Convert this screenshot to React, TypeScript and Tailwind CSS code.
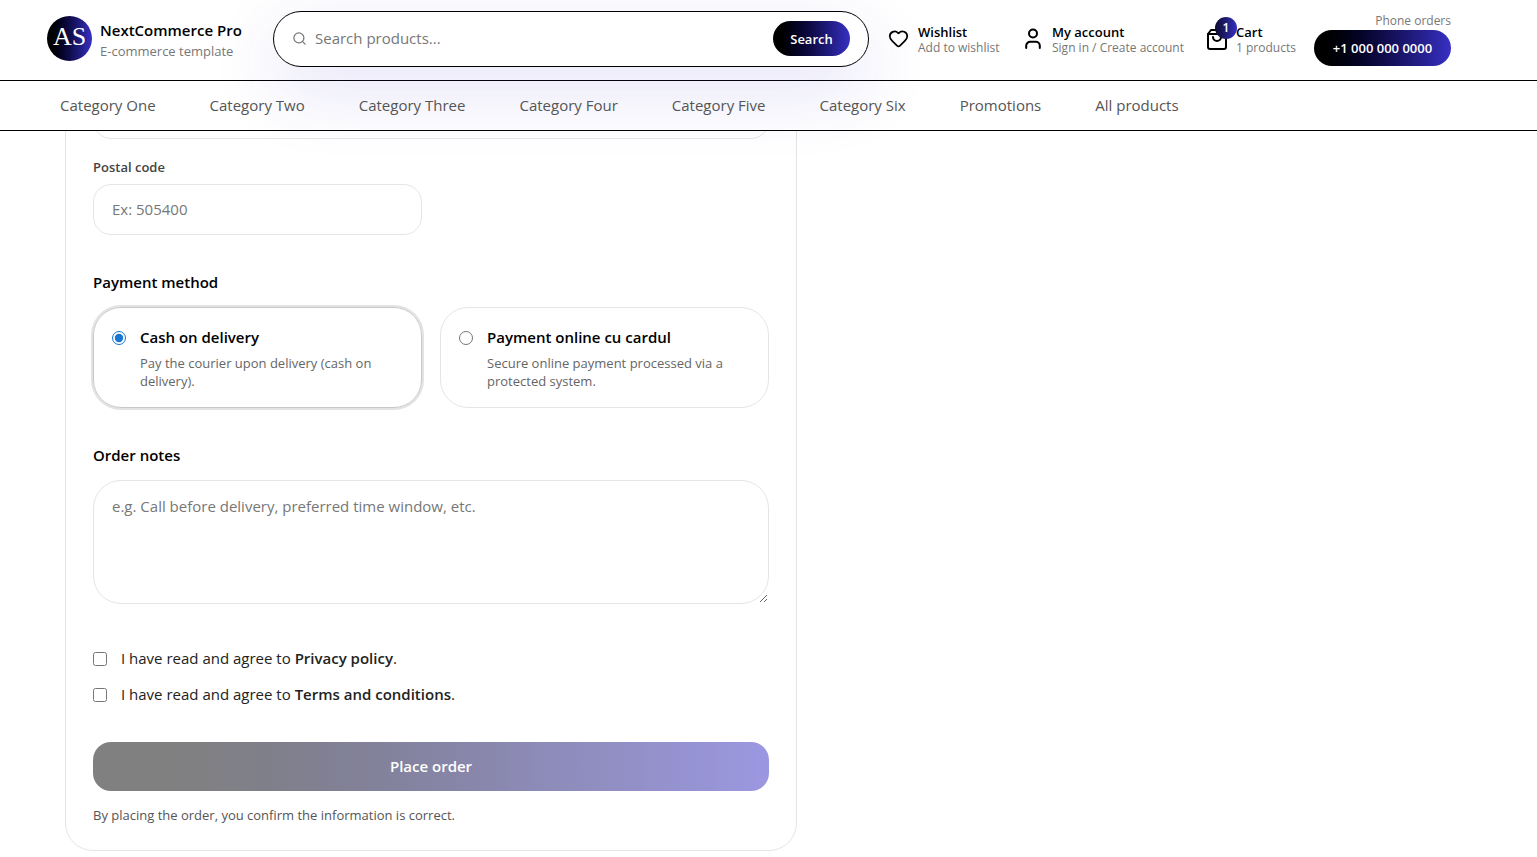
import { Heart, Search } from "lucide-react";

const categories = [
  "Category One",
  "Category Two",
  "Category Three",
  "Category Four",
  "Category Five",
  "Category Six",
  "Promotions",
  "All products",
];

const payments = [
  { id: "cod", title: "Cash on delivery", text: "Pay the courier upon delivery (cash on delivery)." },
  { id: "card", title: "Payment online cu cardul", text: "Secure online payment processed via a protected system." },
];

const policies = [
  { id: "privacy", label: "Privacy policy" },
  { id: "terms", label: "Terms and conditions" },
];

const UserIcon = () => (
  <svg className="shrink-0" width="20" height="22" viewBox="0 0 20 22" fill="none" stroke="currentColor" strokeWidth="2" strokeLinecap="round">
    <circle cx="10" cy="5.5" r="4" />
    <path d="M3.2 20v-2.2a4 4 0 0 1 4-4h5.600a4 4 0 0 1 4 4V20" />
  </svg>
);

const BagIcon = () => (
  <svg className="shrink-0" width="20" height="22" viewBox="0 0 20 22" fill="none" stroke="currentColor" strokeWidth="2" strokeLinecap="round" strokeLinejoin="round">
    <path d="M4 2h12l3 4v13a2 2 0 0 1-2 2H3a2 2 0 0 1-2-2V6z" />
    <path d="M1 6h18M6 9a4 4 0 0 0 8 0" />
  </svg>
);

const Header = () => {
  return (
    <header className="relative z-10 bg-white">
      <div className="flex h-[80px] items-center pr-[86px] pb-[3px] pl-[47px]">
        <a href="#" className="flex w-[226px] shrink-0 items-center gap-2">
          <span className="flex size-[45px] shrink-0 items-center justify-center rounded-full bg-linear-to-r from-black to-[#3730c4] pb-1 font-['Liberation_Serif',serif] text-[26px] leading-none text-white">
            AS
          </span>
          <span className="flex flex-col pt-[3px]">
            <span className="text-[15px] leading-[22px] font-semibold text-black">NextCommerce Pro</span>
            <span className="text-[13px] leading-5 text-[#777]">E-commerce template</span>
          </span>
        </a>
        <form className="mr-[19px] flex h-14 min-w-0 flex-1 items-center rounded-full border border-black bg-white px-[18px] shadow-[0_24px_70px_rgba(55,48,196,0.14)]">
          <Search className="size-[15px] shrink-0 text-[#777]" strokeWidth={2} />
          <input type="search" aria-label="Search products" placeholder="Search products..." className="ml-2 min-w-0 flex-1 bg-transparent text-[15px] outline-none placeholder:text-[#777]" />
          <button type="submit" className="h-[35px] w-[77px] rounded-full bg-linear-to-r from-black to-[#3730c4] pt-[3px] text-[13px] font-semibold text-white">
            Search
          </button>
        </form>
        <div className="flex shrink-0 items-center gap-6 leading-4">
          <a href="#" className="flex w-[111px] items-center gap-[9px] whitespace-nowrap">
            <Heart className="size-[21px] shrink-0" strokeWidth={2} />
            <span className="flex flex-col pt-[3px]">
              <span className="text-[13px] font-semibold">Wishlist</span>
              <span className="text-[12px] text-[#777]">Add to wishlist</span>
            </span>
          </a>
          <a href="#" className="flex w-[160px] items-center gap-[9px] whitespace-nowrap">
            <UserIcon />
            <span className="flex flex-col pt-[3px]">
              <span className="text-[13px] font-semibold">My account</span>
              <span className="text-[12px] text-[#777]">Sign in / Create account</span>
            </span>
          </a>
          <a href="#" className="relative flex w-[88px] items-center gap-[9px] whitespace-nowrap">
            <BagIcon />
            <span className="absolute -top-1 left-2 flex size-[22px] items-center justify-center rounded-full bg-linear-to-r from-[#0c0b30] to-[#3730c4] text-[12px] font-semibold text-white">
              1
            </span>
            <span className="flex flex-col pt-[3px]">
              <span className="text-[13px] font-semibold">Cart</span>
              <span className="text-[12px] text-[#777]">1 products</span>
            </span>
          </a>
        </div>
        <div className="ml-[19px] flex w-[137px] shrink-0 flex-col items-end pt-px">
          <span className="text-[12px] leading-[18px] text-[#777]">Phone orders</span>
          <a href="tel:+10000000000" className="flex h-9 w-full items-center justify-center rounded-full bg-linear-to-r from-black to-[#3730c4] pt-0.5 text-[13px] font-semibold text-white">
            +1 000 000 0000
          </a>
        </div>
      </div>
      <nav className="flex h-[51px] items-center gap-[54px] border-y border-black px-[60px] text-[15px] whitespace-nowrap text-[#555]">
        {categories.map((name) => (
          <a key={name} href="#">
            {name}
          </a>
        ))}
      </nav>
    </header>
  );
};

export default function App() {
  return (
    <div className="min-h-screen bg-white font-['Open_Sans',sans-serif] text-black">
      <Header />
      <main className="overflow-hidden px-[65px] pb-[6px]">
        <form className="-mt-20 w-full max-w-[732px] rounded-[28px] border border-[#e5e5e5] bg-white px-[27px] pt-9 pb-[25px]">
          <input aria-label="Address" className="block h-[51px] w-full rounded-[18px] border border-[#e5e5e5] px-[18px]" />

          <div className="mt-[18px] grid grid-cols-2 gap-[18px]">
            <div>
              <label htmlFor="postal" className="block text-[13px] leading-5 font-semibold text-[#444]">
                Postal code
              </label>
              <input id="postal" placeholder="Ex: 505400" className="mt-[7px] block h-[51px] w-full rounded-[18px] border border-[#e5e5e5] px-[18px] pb-0.5 text-[15px] outline-none placeholder:text-[#777]" />
            </div>
          </div>

          <h2 className="mt-[35px] text-[15px] leading-6 font-semibold">Payment method</h2>
          <div className="mt-[13px] grid grid-cols-2 gap-[18px]">
            {payments.map((item) => (
              <label
                key={item.id}
                htmlFor={item.id}
                className="flex gap-[14px] rounded-[28px] border border-[#e5e5e5] px-[18px] py-[17px] has-checked:border-[#c8c8c8] has-checked:ring-2 has-checked:ring-[#e3e3e3]"
              >
                <input type="radio" id={item.id} name="payment" defaultChecked={item.id === "cod"} className="mt-[6px] size-[14px] shrink-0 accent-[#1976d2]" />
                <span>
                  <span className="block text-[15px] leading-6 font-semibold">{item.title}</span>
                  <span className="mt-[5px] block text-[13px] leading-[18px] text-[#666]">{item.text}</span>
                </span>
              </label>
            ))}
          </div>

          <label htmlFor="notes" className="mt-[35px] block text-[15px] leading-6 font-semibold">
            Order notes
          </label>
          <textarea
            id="notes"
            placeholder="e.g. Call before delivery, preferred time window, etc."
            className="mt-[13px] block h-[124px] w-full resize-y rounded-[28px] border border-[#e5e5e5] px-[18px] py-[13px] text-[15px] leading-6 outline-none placeholder:text-[#777]"
          />

          <div className="mt-[42px] flex flex-col gap-[10px] text-[15px] leading-6 text-[#222]">
            {policies.map((item) => (
              <div key={item.id} className="flex items-center gap-[14px]">
                <input type="checkbox" id={item.id} className="size-[14px]" />
                <label htmlFor={item.id} className="pb-0.5">
                  I have read and agree to{" "}
                  <a href="#" className="font-semibold">
                    {item.label}
                  </a>
                  .
                </label>
              </div>
            ))}
          </div>

          <button type="submit" disabled className="mt-[34px] block h-[49px] w-full rounded-[18px] bg-linear-to-r from-black to-[#3730c4] text-[15px] font-semibold text-white opacity-50">
            Place order
          </button>
          <p className="mt-[14px] text-[13px] leading-5 text-[#555]">By placing the order, you confirm the information is correct.</p>
        </form>
      </main>
    </div>
  );
}
